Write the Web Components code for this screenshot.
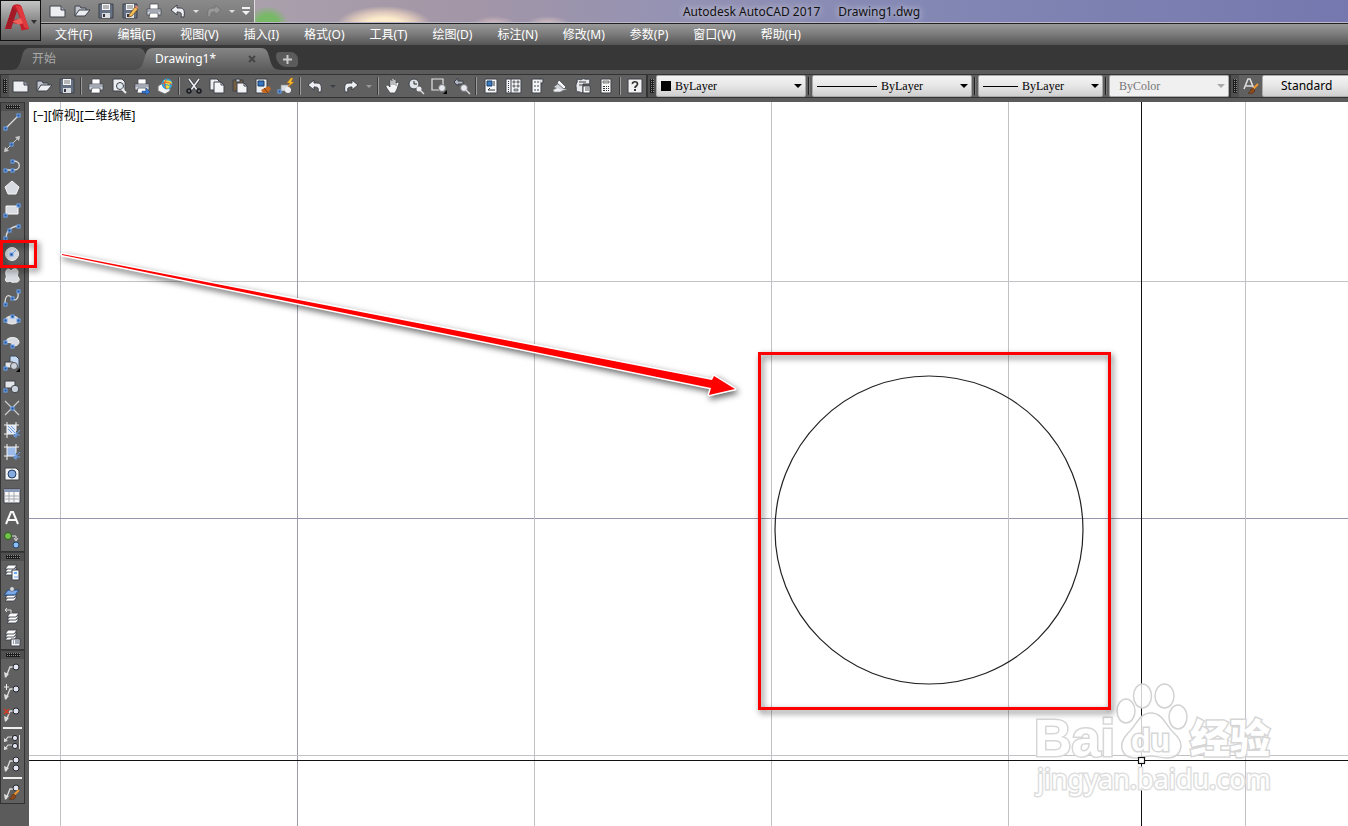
<!DOCTYPE html>
<html lang="zh-CN">
<head>
<meta charset="utf-8">
<title>Autodesk AutoCAD 2017</title>
<style>
  html, body { height: 100%; margin: 0; overflow: hidden; }
  body { font: 12px/16px "Noto Sans", "Noto Sans CJK SC", sans-serif; background: #5b5b5b; }
</style>
</head>
<body>
<cad-app></cad-app>
<script>
(function () {
  // Shared pieces of the 16x16 icons
  const L = "#eceef1";
  const D = "#3c4149";
  const B = "#6aa6f6";
  const node = (x, y) => `<rect x="${x - 1}" y="${y - 1}" width="3" height="3" fill="#2c4f86" stroke="${B}"/>`;
  const ball = (x, y, r = 3) => `<circle cx="${x}" cy="${y}" r="${r}" fill="#e3e6f2" stroke="#22252a"/>`;
  const leader = `<path d="M2 15L6 5H10" fill="none" stroke="#ddd" stroke-width="1.3"/><path d="M0 10L1 16L5 12Z" fill="#ddd"/>`;
  const brush = `<path d="M10 11L15 6" stroke="#f2962e" stroke-width="2"/><path d="M5 15C8 15 6 11 10 10L12 12C11 16 8 16 5 15Z" fill="#8a4a1c" stroke="#4d2a12" stroke-width=".5"/>`;
  const sheets = (y) => [6, 3, 0].map(d => `<path d="M4 ${y + d}H13L10 ${y + 4 + d}H1Z" fill="#fff" stroke="${D}" stroke-width=".9"/>`).join("");
  const printer = `<path d="M4 1H12V7H4Z" fill="#fff" stroke="${D}" stroke-width=".7"/><path d="M1 6H15V12H1Z" fill="#cfd3da" stroke="${D}" stroke-width=".7"/><path d="M1 8H15" stroke="#7a8292"/><path d="M4 10H12V15H3Z" fill="#fff" stroke="${D}" stroke-width=".7"/>`;
  const floppy = `<path d="M1 1H15V15H1Z" fill="#657082" stroke="${D}"/><path d="M4 1H12V7H4Z" fill="#f4f5f7"/><path d="M5 3H11M5 5H11" stroke="#777"/><path d="M4 10H12V15H4Z" fill="#d9dce1"/><path d="M5 11H7V14H5Z" fill="#334"/>`;
  const crop = (fill) => `<path d="M3 3H12V12H3Z" fill="${fill}"/><path d="M0 3H15M0 12H10M3 0V16M12 0V9" stroke="#f5f5f5"/><path d="M9 13H16M12 10V16M10 15L16 8" stroke="${B}"/>`;

  const ICONS = {
    new: `<path d="M0 3H11L15 7V14H0Z" fill="${L}" stroke="${D}"/><path d="M11 3V7H15" fill="#aab0b9" stroke="${D}"/>`,
    open: `<path d="M1 13V3H6L7 5H12V8" fill="#c3c8d0" stroke="${D}"/><path d="M1 13L5 7H16L11 13Z" fill="${L}" stroke="${D}"/>`,
    save: floppy,
    saveas: floppy + `<path d="M7 12L13 4L16 6L10 13L7 14Z" fill="#f3bd58" stroke="#6b4014" stroke-width=".7"/><path d="M13 4L14 2L16 4V6Z" fill="#e58a72"/>`,
    print: printer,
    preview: `<path d="M2 1H11L14 4V13H2Z" fill="${L}" stroke="${D}"/><circle cx="9" cy="8" r="3.5" fill="#dfe5ec" stroke="${D}"/><path d="M11 11L15 15" stroke="#eee" stroke-width="2"/>`,
    plot: printer + `<path d="M8 13H12V10L16 14L12 17V15H8Z" fill="#3479d8" stroke="#163b70" stroke-width=".4"/>`,
    globe: `<path d="M1 8L6 5L13 8V13L8 16L1 13Z" fill="#f5f5f5" stroke="#6d7074"/><circle cx="10" cy="6" r="5.4" fill="#2ca6e0"/><path d="M7 2C11 3 14 2 15 5L12 7L7 5Z" fill="#f1d63f"/><path d="M9 7L13 8L11 11L9 10Z" fill="#f2db34"/><path d="M10 1C6 4 7 9 10 11M5 6C9 3 12 4 15 7" fill="none" stroke="#e4572e"/>`,
    cut: `<path d="M3 1L11 12M13 1L5 12" stroke="${D}" stroke-width="3"/><path d="M3 1L11 12M13 1L5 12" stroke="${L}" stroke-width="1.5"/><circle cx="3" cy="13" r="2" fill="none" stroke="#181b20" stroke-width="1.5"/><circle cx="13" cy="13" r="2" fill="none" stroke="#181b20" stroke-width="1.5"/>`,
    copy: `<path d="M1 1H8L10 3V12H1Z" fill="${L}" stroke="${D}"/><path d="M5 4H12L15 7V15H5Z" fill="#f4f5f6" stroke="${D}"/><path d="M12 4V7H15" fill="none" stroke="${D}"/>`,
    paste: `<path d="M1 2H11V13H1Z" fill="#77603f" stroke="${D}"/><path d="M4 1H8V4H4Z" fill="#c9ccd2" stroke="${D}"/><path d="M5 5H12L15 8V15H5Z" fill="#f2f3f5" stroke="${D}"/><path d="M12 5V8H15" fill="none" stroke="${D}"/>`,
    match: `<path d="M1 1H12V15H1Z" fill="${L}" stroke="${D}"/><path d="M3 3H9V8H3Z" fill="#3376c4" stroke="#17395f"/><path d="M6 12L14 8L16 11L13 15H8Z" fill="#c76a22"/><path d="M9 10L13 15" stroke="#733b12"/>`,
    block: `<path d="M3 7H11V13H3Z" fill="#d8dbe0" stroke="#888" stroke-width=".6"/><circle cx="10" cy="12" r="3" fill="${L}"/><path d="M13 0L9 5H12L10 9L16 4H13L15 0Z" fill="#f6c52e" stroke="#c46c12" stroke-width=".5"/>` + node(1, 13),
    undo: `<path d="M1 7L7 2V5H10C14 5 15 8 14 14H11C12 10 11 9 7 9V12Z" fill="${L}" stroke="${D}"/>`,
    redo: `<path d="M15 7L9 2V5H6C2 5 1 8 2 14H5C4 10 5 9 9 9V12Z" fill="${L}" stroke="${D}"/>`,
    redooff: `<path d="M15 7L9 2V5H6C2 5 1 8 2 14H5C4 10 5 9 9 9V12Z" fill="#989898" stroke="#747474"/>`,
    pan: `<path d="M5 9V3C5 1 7 1 7 3V1C7 0 9 0 9 1V2C9 1 11 1 11 3V5C12 4 14 4 14 5L12 11L10 15H5L1 9C1 6 3 7 5 9Z" fill="#f4f4f4" stroke="${D}" stroke-width=".8"/><path d="M7 3V7M9 2V7M11 4V8" stroke="#555" stroke-width=".7"/>`,
    zoomrt: `<circle cx="6" cy="6" r="5" fill="#dfe3e9" stroke="${D}"/><path d="M6 3V6H9" fill="none" stroke="#222"/><circle cx="11" cy="11" r="2.5" fill="${L}"/><path d="M12 12L16 16" stroke="#ddd" stroke-width="1.5"/>`,
    zoomwin: `<path d="M1 1H12V12H1Z" fill="none" stroke="#e3e3e3" stroke-width="1.2"/><circle cx="11" cy="10" r="3.5" fill="#e6e9ef" stroke="#777"/><path d="M12 16H16V12Z" fill="#000"/>`,
    zoomprev: `<path d="M0 4L4 0V3H9V6H4V8Z" fill="#aeb3bd" stroke="${D}"/><circle cx="10" cy="10" r="3.5" fill="#e6e9ef" stroke="#777"/><path d="M12 12L16 16" stroke="#ddd" stroke-width="1.5"/>`,
    props: `<path d="M2 1H14V15H2Z" fill="#f6f7f8" stroke="${D}"/><path d="M4 3H9V8H4Z" fill="#3b79c0" stroke="#163c69"/><path d="M11 3V8M5 12H12M5 12L7 10" stroke="#333" fill="none"/>`,
    center: `<path d="M0 1H15V15H0Z" fill="#f4f5f6" stroke="${D}"/><path d="M5 1V15" stroke="${D}"/><path d="M2.500 3V14" stroke="#333" stroke-dasharray="1 1"/><path d="M7 3H9V5H7ZM11 3H13V5H11ZM7 7H9V9H7ZM11 7H13V9H11ZM8 11H12V13H8Z" fill="#aeb8c7" stroke="#444" stroke-width=".6"/>`,
    palette: `<path d="M3 1H12V15H3Z" fill="#f4f5f6" stroke="${D}"/><path d="M10 1H14V5H12" stroke="${D}" fill="#dfe1e4"/><path d="M5 3H7V5H5ZM8 3H10V5H8ZM5 7H7V9H5ZM8 7H10V9H8ZM5 11H7V13H5ZM8 11H10V13H8Z" fill="#9ba0a8"/>`,
    sheet: `<path d="M1 12L8 8L15 12H12L8 14H2Z" fill="${L}" stroke="#777" stroke-width=".7"/><path d="M2 9L10 12L13 10L6 6Z" fill="#cfd3da"/><path d="M5 5L7 2L14 9L12 11Z" fill="#f8f8f8" stroke="${D}" stroke-width=".7"/>`,
    markup: `<path d="M2 2C4 0 5 3 7 1C9 0 11 2 13 1C16 1 14 4 15 6H8V14C6 16 5 13 3 14C0 13 2 11 1 9C0 6 3 5 2 2Z" fill="#e6e8ec" stroke="${D}"/><path d="M4 4L11 4M4 7H8" stroke="#444"/><path d="M8 8H15V15H8Z" fill="#fff" stroke="${D}"/><path d="M10 10H14M10 12H14" stroke="#555"/>`,
    calc: `<path d="M3 1H13V15H3Z" fill="#f6f6f6" stroke="${D}"/><path d="M5 3H11V5H5Z" fill="#d5d8dc" stroke="#333" stroke-width=".6"/><path d="M5 8H7V9H5ZM8 8H9V9H8ZM10 8H11V9H10ZM5 10H7V11H5ZM8 10H9V11H8ZM10 10H11V11H10ZM5 12H7V13H5ZM8 12H9V13H8ZM10 12H11V13H10Z" fill="#333"/>`,
    help: `<path d="M1 1H15V15H1Z" fill="#f2f2f2" stroke="${D}"/><path d="M5.500 6C5 3 10.500 3 10.500 6C10.500 8 8 8 8 10" fill="none" stroke="#333" stroke-width="1.700"/><path d="M7 11H9V13H7Z" fill="#333"/>`,
    style: `<path d="M1 11L5 1H7L11 11M3 8H9" stroke="#ddd" stroke-width="1.6" fill="none"/>` + brush,
    line: `<path d="M2 14L14 2" stroke="#ddd" stroke-width="1.3"/>` + node(1, 14) + node(14, 1),
    xline: `<path d="M3 13L13 3" stroke="#ccc"/><path d="M0 16L1 11L5 15ZM16 0L11 1L15 5Z" fill="#ccc"/>` + node(7, 8),
    pline: `<path d="M1 12H10C17 12 17 3 10 3H8" fill="none" stroke="#ddd" stroke-width="1.3"/>` + node(1, 12) + node(8, 12) + node(8, 3),
    polygon: `<path d="M8 1L15 7L12 14H4L1 7Z" fill="#d9dbe2" stroke="#f5f5f5"/>`,
    rect: `<path d="M2 4H14V12H2Z" fill="#d9dbe2" stroke="#fafafa"/>` + node(1, 13) + node(14, 3),
    arc: `<path d="M2 15C2 7 6 3 14 2" fill="none" stroke="#ddd" stroke-width="1.3"/>` + node(1, 14) + node(5, 6) + node(14, 2),
    circle: `<circle cx="8" cy="8" r="6.5" fill="#d5d8df" stroke="#eceef2"/><path d="M8 8L12 4" stroke="${B}"/>` + node(7, 8),
    cloud: `<path d="M2 3C3 0 6 1 7 3C9 0 14 0 14 4C14 6 13 7 14 9C17 12 14 15 11 14C9 15 7 14 6 13C3 15 0 13 2 10C3 8 1 6 2 3Z" fill="#d9dbe2" stroke="#f3f3f3"/>`,
    spline: `<path d="M1 14C1 3 6 5 8 8C11 12 15 9 14 2" fill="none" stroke="#ddd" stroke-width="1.3"/>` + node(1, 14) + node(8, 8) + node(14, 1),
    ellipse: `<ellipse cx="8" cy="8" rx="6.5" ry="4" fill="#d9dbe2" stroke="#f3f3f3"/>` + node(1, 8) + node(14, 8) + node(8, 4),
    earc: `<path d="M2 8C2 2 15 2 15 8C15 12 10 12 8 12L8 9Z" fill="#d9dbe2" stroke="#f3f3f3"/>` + node(1, 8) + node(8, 12),
    insert: `<path d="M6 0H12L15 3V12H6Z" fill="#c5daf2" stroke="#3b4654"/><path d="M1 6H9V12H1Z" fill="#e4e6ea" stroke="${D}"/><circle cx="10" cy="10" r="3.5" fill="#ccd2dc" stroke="#555"/><path d="M12 16H16V12Z"/>` + node(1, 12),
    mblock: `<path d="M1 3H11V10H1Z" fill="#e4e6ea" stroke="${D}"/><circle cx="11" cy="11" r="3.8" fill="#ccd2dc" stroke="${D}"/>` + node(1, 12),
    point: `<path d="M1 1L15 15M1 15L15 1" stroke="#ccc" stroke-width="1.2"/>` + node(8, 8),
    hatch: crop("#dfe6f4") + `<path d="M4 7L8 11M4 4L11 11M7 4L11 8" stroke="#6f9ddc"/>`,
    gradient: crop("#9dbbe8"),
    region: `<path d="M1 2H12L15 5V14H1Z" fill="#f2f2f2" stroke="${D}"/><circle cx="8" cy="8" r="4" fill="#86acdf" stroke="#243b61"/>`,
    table: `<path d="M0 1H16V15H0Z" fill="#f7f7f7" stroke="${D}"/><path d="M0 1H16V4H0Z" fill="#8a9ab8"/><path d="M5 4V15M10 4V15M0 8H16M0 11H16" stroke="#a3a7ae"/>`,
    mtext: `<path d="M2 14L7 2H9L14 14M4 10H12" stroke="#f7f7f7" stroke-width="2" fill="none"/>`,
    addsel: `<circle cx="4" cy="4" r="3.5" fill="#74c24b" stroke="#2b5c1a"/><path d="M8 4H12V8M10 6L12 9L14 6" stroke="#ddd" fill="none"/><circle cx="12" cy="13" r="3" fill="#8cc0f5" stroke="#23436b"/>`,
    layprops: sheets(1) + `<path d="M8 6H15V16H8Z" fill="#f4f6fa" stroke="${D}"/><path d="M10 8H13V10H10Z" fill="${B}"/><path d="M10 13H14" stroke="${B}"/>`,
    laycur: sheets(5) + `<path d="M4 4H15L11 9H0Z" fill="#79a9e8" stroke="#294b7c"/><circle cx="8" cy="3" r="2.3" fill="#d9dce2" stroke="#555" stroke-width=".6"/>`,
    layprev: `<g transform="translate(2 1)">${sheets(4)}</g><path d="M1 2H7V5M1 2L3 0M1 2L3 4" stroke="#ddd" fill="none"/>`,
    laystate: sheets(0) + `<path d="M7 9H16V16H7Z" fill="#f4f6fa" stroke="${D}"/><path d="M9 11H10M11 11H15M9 13H10M11 13H15" stroke="#456"/>`,
    mleader: leader + ball(12, 5),
    addlead: leader + ball(12, 5) + `<path d="M0 3H5M2.5 0V6" stroke="#eee"/>`,
    remlead: leader + ball(12, 5) + `<path d="M0 3L5 8M5 3L0 8" stroke="#d83a20" stroke-width="1.4"/>`,
    alignlead: `<path d="M1 7L4 3H8M1 15L4 11H8" fill="none" stroke="#ddd" stroke-width="1.2"/><path d="M0 4V8L4 7ZM0 12V16L4 15Z" fill="#ddd"/><path d="M15.500 1V15" stroke="#ddd"/>` + ball(11, 4, 2.6) + ball(11, 12, 2.6),
    collead: leader + ball(12, 4) + ball(12, 12),
    leadstyle: leader + ball(12, 4) + brush,
    custom: `<path d="M4 4H12V6H4ZM4 8H12L8 12Z" fill="#f2f2f2"/>`,
    logo: `<path d="M0 16L5 1C6 -1 10 -1 11 1L16 16L11 17L10 13L5 12L4 16Z" fill="#c4202b"/><path d="M0 16L5 1L8 4L4 16Z" fill="#a31a26"/><path d="M8 4L10 9L6 10Z" fill="#777"/><path d="M5 11L12 8L13 12L9 13Z" fill="#ef605b"/><path d="M7 0L11 1L16 16L13 15Z" fill="#de3a40"/>`
  };

  // Small helper: one class per tag, the markup may depend on the attributes
  function define(tag, render) {
    customElements.define(tag, class extends HTMLElement {
      constructor() {
        super();
        this.attachShadow({ mode: "open" });
      }
      connectedCallback() {
        if (this.shadowRoot.childNodes.length) return;
        const tmpl = document.createElement("template");
        tmpl.innerHTML = render(this);
        this.shadowRoot.appendChild(tmpl.content.cloneNode(true));
      }
    });
  }

  define("cad-icon", el => `
    <style>
      :host { display: block; width: 16px; height: 16px; }
      svg { display: block; width: 100%; height: 100%; overflow: visible; }
    </style>
    <svg viewBox="0 0 16 16" aria-hidden="true">${ICONS[el.getAttribute("name")] || ""}</svg>`);

  define("cad-tool", el => `
    <style>
      :host { display: block; flex: none; width: var(--tool-width, 23px); height: 22px; }
      button { display: flex; align-items: center; justify-content: center; width: 100%; height: 100%; padding: 0; border: 0; background: none; }
      button:hover { background: #7d7d7d; }
    </style>
    <button type="button" title="${el.getAttribute("label")}" aria-label="${el.getAttribute("label")}"><cad-icon name="${el.getAttribute("icon")}"></cad-icon></button>`);

  define("cad-caret", () => `
    <style>
      :host { display: block; flex: none; width: var(--caret-width, 13px); height: 22px; color: #3c4048; }
      button { display: flex; align-items: center; justify-content: center; width: 100%; height: 100%; padding: 0; border: 0; background: none; color: inherit; }
      i { border: 3px solid transparent; border-top: 3px solid currentColor; border-bottom: 0; }
    </style>
    <button type="button" aria-label="更多"><i></i></button>`);

  define("cad-separator", () => `
    <style>
      :host { display: flex; flex: none; width: 6px; align-items: center; justify-content: center; }
      :host([vertical]) { width: auto; height: 6px; }
      i { width: 1px; height: 18px; background: #9a9a9a; border-left: 1px solid #3b3b3b; }
      :host([vertical]) i { width: 19px; height: 2px; border: 0; background: #eee; }
      :host([dark]) i { background: #777; border-color: #222; }
    </style>
    <i></i>`);

  define("cad-toolbar", () => `
    <style>
      :host { display: flex; flex: none; box-sizing: border-box; border: 1px solid #333; background: #606060; }
      :host([vertical]) { flex-direction: column; border-top-color: #3a3a3a; }
      .grip { flex: none; display: flex; align-items: center; justify-content: center; width: 8px; background: #505050; }
      .grip i { width: 4px; height: 14px; background: conic-gradient(#8a8a8a 25%, #1c1c1c 0) 0 0 / 2px 2px; }
      :host([vertical]) .grip { width: auto; height: 8px; }
      :host([vertical]) .grip i { width: 14px; height: 4px; }
    </style>
    <div class="grip"><i></i></div>
    <slot></slot>`);

  define("cad-combo", el => {
    const value = el.getAttribute("value");
    const disabled = el.hasAttribute("disabled") ? "disabled" : "";
    return `
    <style>
      :host { display: grid; flex: none; height: 22px; }
      select, .mark, .arrow { grid-area: 1 / 1; }
      select {
        appearance: none; width: 100%; height: 22px; margin: 0; padding: 0 18px 0 var(--indent, 18px);
        border: 1px solid #aaa; border-radius: 2px; color: #000;
        background: linear-gradient(#f4f4f4, #e6e6e6 50%, #cfcfcf);
        font: 12px/18px var(--combo-font, "Liberation Serif"), serif;
      }
      select:disabled { color: #777; opacity: 1; background: #f0f0f0; }
      .mark { align-self: center; margin-left: 5px; width: var(--mark-width, 0); height: var(--mark-height, 1px); background: #000; pointer-events: none; z-index: 1; }
      .arrow { align-self: center; justify-self: end; margin-right: 4px; border: 4px solid transparent; border-top-color: #000; border-bottom: 0; pointer-events: none; z-index: 1; }
      select:disabled ~ .arrow { border-top-color: #aaa; }
    </style>
    <select aria-label="${el.getAttribute("label")}" ${disabled}><option>${value}</option></select>
    <span class="mark"></span>
    <span class="arrow"></span>`;
  });

  define("cad-titlebar", () => `
    <style>
      :host {
        display: flex; height: 24px; box-sizing: border-box; padding-left: 41px; border-bottom: 1px solid #222;
        background:
          radial-gradient(20px 18px at 268px 24px, #78b965 50%, transparent),
          radial-gradient(48px 20px at 384px 26px, #fdeccb 40%, #f6dcc4aa 70%, transparent),
          radial-gradient(22px 8px at 494px 24px, #d8bfc0, transparent),
          radial-gradient(22px 8px at 548px 24px, #dcc4c0, transparent),
          linear-gradient(90deg, #aaa0ac 255px, #a396a6 460px, #9492b4 680px, #8488b4 900px, #7478ae);
      }
      .quick {
        display: flex; flex: none; align-items: center; width: 214px; box-sizing: border-box; padding-left: 5px;
        background: linear-gradient(#8a8a8a, #777); border-right: 1px solid #ddd; border-bottom: 1px solid #b0b0b0;
        --tool-width: 24px; --caret-width: 12px;
      }
      cad-caret { color: #e0e0e0; }
      cad-tool:last-child { --tool-width: 16px; }
      .title {
        flex: 1; display: flex; justify-content: center; gap: 18px; padding-top: 4px; border-bottom: 1px solid #bcb8cc;
        color: #111; text-shadow: 0 0 6px #fff8, 0 0 8px #fff8;
      }
    </style>
    <div class="quick">
      <cad-tool icon="new" label="新建"></cad-tool>
      <cad-tool icon="open" label="打开"></cad-tool>
      <cad-tool icon="save" label="保存"></cad-tool>
      <cad-tool icon="saveas" label="另存为"></cad-tool>
      <cad-tool icon="print" label="打印"></cad-tool>
      <cad-tool icon="undo" label="放弃"></cad-tool>
      <cad-caret></cad-caret>
      <cad-tool icon="redooff" label="重做"></cad-tool>
      <cad-caret></cad-caret>
      <cad-tool icon="custom" label="自定义"></cad-tool>
    </div>
    <div class="title"><span>Autodesk AutoCAD 2017</span><span>Drawing1.dwg</span></div>`);

  define("cad-menubar", () => `
    <style>
      :host { display: block; height: 21px; background: linear-gradient(#999, #7d7d7d 45%, #555); }
      nav { display: flex; gap: 25px; padding-left: 55px; }
      button { padding: 0; border: 0; background: none; color: #fff; font: inherit; line-height: 21px; white-space: nowrap; }
    </style>
    <nav>${["文件(F)", "编辑(E)", "视图(V)", "插入(I)", "格式(O)", "工具(T)", "绘图(D)", "标注(N)", "修改(M)", "参数(P)", "窗口(W)", "帮助(H)"]
      .map(t => `<button type="button">${t}</button>`).join("")}</nav>`);

  define("cad-tab", el => `
    <style>
      :host { display: block; flex: none; width: 148px; height: 22px; margin-right: -25px; color: #aaa; --tab: linear-gradient(#5d5d5d, #4d4d4d); }
      :host([active]) { color: #fff; --tab: linear-gradient(#858585, #5c5c5c); z-index: 1; }
      .shape {
        display: flex; align-items: center; height: 100%; padding: 0 25px 0 22px; background: var(--tab);
        clip-path: path("M0 22C8 22 9 18 11 12C13 4 14 0 20 0H128C134 0 135 4 137 12C139 18 140 22 148 22Z");
      }
      button { padding: 0; border: 0; background: none; color: inherit; font: inherit; }
      .name { flex: 1; text-align: left; }
      svg { display: block; }
    </style>
    <div class="shape">
      <button class="name" type="button"><slot></slot></button>
      ${el.hasAttribute("active") ? `<button type="button" aria-label="关闭"><svg width="8" height="8"><path d="M1 1L7 7M7 1L1 7" stroke="#454545" stroke-width="2"/></svg></button>` : ""}
    </div>`);

  define("cad-tabs", () => `
    <style>
      :host { display: flex; align-items: end; height: 25px; box-sizing: border-box; padding-left: 10px; background: #373737; }
      .add {
        display: grid; place-items: center; width: 22px; height: 15px; margin: 0 0 3px 20px; padding: 0; border: 0;
        border-radius: 4px 8px 4px 12px; background: #5b5b5b;
      }
    </style>
    <cad-tab>开始</cad-tab>
    <cad-tab active>Drawing1*</cad-tab>
    <button class="add" type="button" aria-label="新图形"><svg width="9" height="9"><path d="M0 4.500H9M4.500 0V9" stroke="#ccc" stroke-width="2"/></svg></button>`);

  const tools = list => list.map(([icon, label]) => `<cad-tool icon="${icon}" label="${label}"></cad-tool>`).join("");

  define("cad-topbars", () => `
    <style>
      :host { display: flex; padding: 4px 0; background: #5b5b5b; overflow: hidden; }
      cad-toolbar { height: 24px; }
      .text { flex: 1; }
      .color { width: 150px; --mark-width: 10px; --mark-height: 10px; }
      .type { width: 160px; --indent: 68px; --mark-width: 60px; }
      .weight { width: 125px; --indent: 43px; --mark-width: 35px; }
      .plot { width: 120px; --indent: 9px; }
      .font { flex: 1 0 140px; --indent: 18px; --combo-font: "Noto Sans"; }
    </style>
    <cad-toolbar>
      ${tools([["new", "新建"], ["open", "打开"], ["save", "保存"]])}
      <cad-separator></cad-separator>
      ${tools([["print", "打印"], ["preview", "打印预览"], ["plot", "发布"], ["globe", "三维打印"]])}
      <cad-separator></cad-separator>
      ${tools([["cut", "剪切"], ["copy", "复制"], ["paste", "粘贴"], ["match", "特性匹配"], ["block", "块编辑器"]])}
      <cad-separator></cad-separator>
      <cad-tool icon="undo" label="放弃"></cad-tool><cad-caret></cad-caret>
      <cad-tool icon="redo" label="重做"></cad-tool><cad-caret style="color:#999"></cad-caret>
      <cad-separator></cad-separator>
      ${tools([["pan", "实时平移"], ["zoomrt", "实时缩放"], ["zoomwin", "窗口缩放"], ["zoomprev", "缩放上一个"]])}
      <cad-separator></cad-separator>
      ${tools([["props", "特性"], ["center", "设计中心"], ["palette", "工具选项板"], ["sheet", "图纸集管理器"], ["markup", "标记集管理器"], ["calc", "快速计算器"]])}
      <cad-separator></cad-separator>
      <cad-tool icon="help" label="帮助"></cad-tool>
    </cad-toolbar>
    <cad-toolbar>
      <cad-combo class="color" label="颜色" value="ByLayer"></cad-combo>
      <cad-separator dark></cad-separator>
      <cad-combo class="type" label="线型" value="ByLayer"></cad-combo>
      <cad-separator dark></cad-separator>
      <cad-combo class="weight" label="线宽" value="ByLayer"></cad-combo>
      <cad-separator dark></cad-separator>
      <cad-combo class="plot" label="打印样式" value="ByColor" disabled></cad-combo>
    </cad-toolbar>
    <cad-toolbar class="text">
      <cad-tool icon="style" label="文字样式"></cad-tool>
      <cad-combo class="font" label="文字样式" value="Standard"></cad-combo>
    </cad-toolbar>`);

  define("cad-sidebar", () => `
    <style>
      :host { display: block; flex: none; width: 29px; background: #5b5b5b; }
      cad-toolbar { width: 25px; --tool-width: 22px; }
    </style>
    <cad-toolbar vertical>${tools([
      ["line", "直线"], ["xline", "构造线"], ["pline", "多段线"], ["polygon", "多边形"], ["rect", "矩形"],
      ["arc", "圆弧"], ["circle", "圆"], ["cloud", "修订云线"], ["spline", "样条曲线"], ["ellipse", "椭圆"],
      ["earc", "椭圆弧"], ["insert", "插入块"], ["mblock", "创建块"], ["point", "点"], ["hatch", "图案填充"],
      ["gradient", "渐变色"], ["region", "面域"], ["table", "表格"], ["mtext", "多行文字"], ["addsel", "添加选定对象"]])}</cad-toolbar>
    <cad-toolbar vertical>${tools([
      ["layprops", "图层特性"], ["laycur", "置为当前"], ["layprev", "上一个图层"], ["laystate", "图层状态"]])}</cad-toolbar>
    <cad-toolbar vertical>
      ${tools([["mleader", "多重引线"], ["addlead", "添加引线"], ["remlead", "删除引线"]])}
      <cad-separator vertical></cad-separator>
      ${tools([["alignlead", "对齐"], ["collead", "合并"]])}
      <cad-separator vertical></cad-separator>
      ${tools([["leadstyle", "引线样式"]])}
    </cad-toolbar>`);

  // Model space: grid every 237 units, crosshair, circle and the notes over them
  define("cad-canvas", () => {
    let grid = "";
    for (let i = 0; i < 12; i++) {
      const x = 31 + i * 237;
      const y = 179 + i * 237;
      grid += `<rect x="${x}" width="1" height="100%" fill="${i === 1 ? "#9d9da3" : "#c2c2c6"}"/>`;
      grid += `<rect y="${y}" width="100%" height="1" fill="${i === 1 ? "#9494ac" : "#c2c2c6"}"/>`;
    }
    return `
    <style>
      :host { display: block; flex: 1; min-width: 0; position: relative; background: #fff; color: #000; }
      svg { position: absolute; left: 0; top: 0; width: 100%; height: 100%; overflow: visible; }
      .view { position: relative; padding: 6px 4px; display: flex; }
      .view button { padding: 0; border: 0; background: none; font: inherit; color: inherit; }
      .shadow { filter: drop-shadow(2px 3px 3px #0009); }
      .mark { fill: #fff; fill-opacity: .8; stroke: #d2d2d2; stroke-width: 1.5; }
      .mark text { font-weight: bold; font-family: "Liberation Sans", "Noto Sans CJK SC", sans-serif; fill-opacity: 1; stroke-width: 3; stroke: #d6d6d6; paint-order: stroke; }
      .mark .site { font: 27px "Noto Sans", sans-serif; stroke: #dedede; }
    </style>
    <svg>
      ${grid}
      <rect x="1112" width="1" height="100%" fill="#111"/>
      <g class="mark">
        <ellipse cx="1097" cy="609" rx="9" ry="12"/>
        <ellipse cx="1113.5" cy="594" rx="9" ry="12"/>
        <ellipse cx="1135.5" cy="594" rx="9.5" ry="12"/>
        <ellipse cx="1149" cy="615" rx="9" ry="12"/>
        <path d="M1122 611C1134 611 1137 624 1145 631C1158 643 1151 656 1138 656C1130 656 1128 654 1122 654C1116 654 1114 656 1107 656C1092 656 1088 643 1099 631C1107 624 1110 611 1122 611Z"/>
        <text x="1005" y="654" font-size="52">Bai</text>
        <text x="1102" y="649" font-size="32">du</text>
        <text x="1161" y="651" font-size="40" style="font-weight:900">经验</text>
        <text class="site" x="1008" y="687">jingyan.baidu.com</text>
      </g>
      <rect y="658" width="100%" height="1" fill="#111"/>
      <circle cx="900" cy="428" r="154" fill="none" stroke="#222" stroke-width="1.2"/>
      <rect x="1109.5" y="655.5" width="6" height="6" fill="#fff" stroke="#111" stroke-width="1.2"/>
      <g class="shadow">
        <rect x="-27.5" y="139.5" width="34" height="25" fill="none" stroke="#f00" stroke-width="3"/>
        <rect x="730.5" y="251.5" width="350" height="355" fill="none" stroke="#f00" stroke-width="3"/>
        <path d="M33 152L683 278L685 274L706 287L680 293L682 286L33 153Z" fill="#f00" stroke="#fff" stroke-width="3" stroke-linejoin="round" paint-order="stroke"/>
      </g>
    </svg>
    <div class="view"><button type="button">[−]</button><button type="button">[俯视]</button><button type="button">[二维线框]</button></div>`;
  });

  define("cad-app", () => `
    <style>
      :host { display: flex; flex-direction: column; height: 100%; position: relative; }
      .work { display: flex; flex: 1; min-height: 0; }
      cad-canvas { z-index: 1; }
      /* application button lies over the title bar and the menu */
      .app {
        position: absolute; left: 0; top: 0; z-index: 2; display: flex; align-items: center; gap: 2px; width: 41px; height: 41px;
        padding: 0 2px 8px 4px; border: 1px solid #111; background: linear-gradient(#c4c4c4, #8a8a8a 50%, #606060);
      }
      .app cad-icon { flex: none; width: 24px; height: 26px; }
      .app i { margin-top: 10px; border: 3px solid transparent; border-top: 4px solid #333; border-bottom: 0; }
    </style>
    <cad-titlebar></cad-titlebar>
    <cad-menubar></cad-menubar>
    <cad-tabs></cad-tabs>
    <cad-topbars></cad-topbars>
    <div class="work">
      <cad-sidebar></cad-sidebar>
      <cad-canvas></cad-canvas>
    </div>
    <button class="app" type="button" aria-label="应用程序菜单"><cad-icon name="logo"></cad-icon><i></i></button>`);
})();
</script>
</body>
</html>
